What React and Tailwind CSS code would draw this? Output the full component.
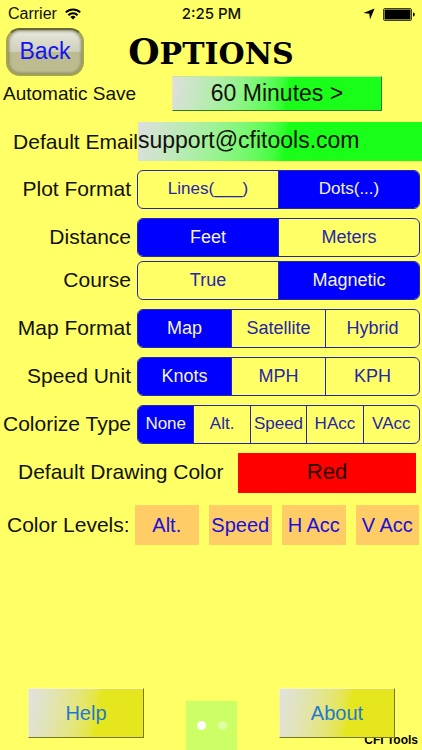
import React, { useState } from 'react';
import clsx from 'clsx';

const SEGMENT_ROWS = [
  { id: 'plot', label: 'Plot Format', options: ['Lines(___)', 'Dots(...)'], initial: 'Dots(...)', row: 'mt-[9px]', text: 'text-[17px]' },
  { id: 'distance', label: 'Distance', options: ['Feet', 'Meters'], initial: 'Feet', row: 'mt-[9px]', text: 'text-[18px]' },
  { id: 'course', label: 'Course', options: ['True', 'Magnetic'], initial: 'Magnetic', row: 'mt-1', text: 'text-[18px]' },
  { id: 'map', label: 'Map Format', options: ['Map', 'Satellite', 'Hybrid'], initial: 'Map', row: 'mt-[9px]', text: 'text-[18px]' },
  { id: 'speed', label: 'Speed Unit', options: ['Knots', 'MPH', 'KPH'], initial: 'Knots', row: 'mt-[9px]', text: 'text-[18px]' },
  { id: 'colorize', label: 'Colorize Type', options: ['None', 'Alt.', 'Speed', 'HAcc', 'VAcc'], initial: 'None', row: 'mt-[9px]', text: 'text-[17px]' },
];

const LEVELS = ['Alt.', 'Speed', 'H Acc', 'V Acc'];

const StatusBar = () => (
  <div className="grid h-7 grid-cols-3 items-center pl-2 pr-[7px]">
    <div className="flex items-center gap-2">
      <span className="text-[16px] leading-5">Carrier</span>
      <svg className="h-3 w-4" viewBox="0 0 16 12" fill="none" stroke="black" strokeWidth="2" aria-hidden="true">
        <path d="M0.8 4.4a10.2 10.2 0 0 1 14.4 0" />
        <path d="M3.4 7.2a6.5 6.5 0 0 1 9.2 0" />
        <path d="M8 11.6L5.4 9a3.7 3.7 0 0 1 5.2 0z" fill="black" stroke="none" />
      </svg>
    </div>
    <span className="text-center font-['Inter',sans-serif] text-[15px] font-medium leading-5">2:25 PM</span>
    <div className="flex items-center justify-end gap-2">
      <svg className="h-3 w-3" viewBox="0 0 12 12" aria-hidden="true">
        <path d="M11.6 0.4L7 11.6 6.3 5.7 0.4 5z" fill="black" />
      </svg>
      <svg className="h-[13px] w-8" viewBox="0 0 32 13" aria-hidden="true">
        <rect x="0.5" y="0.5" width="28" height="12" rx="1.5" fill="none" stroke="black" strokeOpacity="0.75" />
        <rect x="1.5" y="1.5" width="26" height="10" rx="0.5" fill="black" />
        <path d="M30 4.5c1.2 0.4 1.8 1.1 1.8 2s-0.6 1.6-1.8 2z" fill="black" />
      </svg>
    </div>
  </div>
);

const Segmented = ({ id, options, initial, text }) => {
  const [value, setValue] = useState(initial);

  return (
    <div
      role="group"
      aria-labelledby={`${id}-label`}
      className="mr-0.5 flex h-[39px] min-w-0 flex-1 divide-x divide-[#2626a8] overflow-hidden rounded-[6px] border border-[#2626a8]"
    >
      {options.map((option) => (
        <button
          key={option}
          type="button"
          aria-pressed={value === option}
          onClick={() => setValue(option)}
          className={clsx(
            'min-w-0 flex-1 basis-0 whitespace-nowrap pb-0.5 leading-6',
            text,
            value === option ? 'bg-[#0000fe] text-[#f4f4cf]' : 'text-[#2626a8]'
          )}
        >
          {option}
        </button>
      ))}
    </div>
  );
};

const FooterButton = ({ children, className }) => (
  <button
    type="button"
    className={clsx(
      'relative h-[50px] w-[116px] border border-b-[#777720] border-l-[#f4f4a8] border-r-[#777720] border-t-[#f8f8b0] bg-linear-100 from-[#e1e1e1] to-[#e6e61e] to-60% text-[20px] leading-6 text-[#1e7ad0]',
      className
    )}
  >
    {children}
  </button>
);

export default function App() {
  const [email, setEmail] = useState('support@cfitools.com');

  return (
    <main className="flex min-h-screen flex-col bg-[#ffff66] font-['Liberation_Sans',Arial,sans-serif] text-[#111108]">
      <StatusBar />

      <header className="grid h-12 grid-cols-[78px_1fr_78px] items-center px-1.5">
        <button
          type="button"
          className="h-12 rounded-[14px] border-2 border-[#a3a350] border-t-[#66663a] bg-linear-to-b from-[#e8e8df] from-0% via-[#cfcfba] via-50% to-[#bcbc90] to-51% pb-0.5 text-[23px] leading-7 text-[#1414f0] shadow-[inset_0_0_3px_1px_#85855a]"
        >
          Back
        </button>
        <h1 className="text-center font-['DejaVu_Serif',serif] text-[30px] font-bold uppercase leading-10 text-black first-letter:text-[36px]">
          Options
        </h1>
      </header>

      <div className="flex items-center pl-[3px] pr-10">
        <label htmlFor="autosave" className="w-[169px] whitespace-nowrap text-[19px] leading-6">
          Automatic Save
        </label>
        <button
          id="autosave"
          type="button"
          className="h-[35px] flex-1 border border-b-[#2e7d20] border-l-[#e8e8c0] border-r-[#2e7d20] border-t-[#c8e890] bg-linear-100 from-[#dedede] to-[#1aff1a] to-55% pb-0.5 text-[23px] leading-7"
        >
          60 Minutes &gt;
        </button>
      </div>

      <div className="mt-[11px] flex items-center">
        <label htmlFor="email" className="w-[138px] whitespace-nowrap text-right text-[21px] leading-6">
          Default Email
        </label>
        <input
          id="email"
          type="email"
          value={email}
          onChange={(e) => setEmail(e.target.value)}
          className="h-[39px] min-w-0 flex-1 bg-linear-100 from-[#dedede] to-[#1aff1a] to-52% pb-0.5 text-[23px] leading-7 outline-none"
        />
      </div>

      {SEGMENT_ROWS.map(({ id, label, row, ...rest }) => (
        <div key={id} className={clsx('flex items-center gap-1.5', row)}>
          <span id={`${id}-label`} className="w-[131px] whitespace-nowrap pb-0.5 text-right text-[21px] leading-6">
            {label}
          </span>
          <Segmented id={id} {...rest} />
        </div>
      ))}

      <div className="mt-[9px] flex items-center gap-2.5 pl-[18px] pr-1.5">
        <label htmlFor="drawing-color" className="w-[210px] whitespace-nowrap pb-0.5 text-[21px] leading-6">
          Default Drawing Color
        </label>
        <button id="drawing-color" type="button" className="h-10 flex-1 bg-[#fe0000] pb-0.5 text-[22px] leading-6 text-[#2a0800]">
          Red
        </button>
      </div>

      <div className="mt-3 flex items-center gap-1 pl-[7px] pr-[3px]">
        <span id="levels-label" className="w-[124px] whitespace-nowrap text-[21px] leading-6">
          Color Levels:
        </span>
        <div role="group" aria-labelledby="levels-label" className="grid flex-1 grid-cols-4 gap-2.5">
          {LEVELS.map((level) => (
            <button key={level} type="button" className="h-10 whitespace-nowrap bg-[#ffcc66] text-[20px] leading-6 text-[#1c10d8]">
              {level}
            </button>
          ))}
        </div>
      </div>

      <footer className="relative mt-auto flex items-end justify-between pl-7 pr-[27px]">
        <span className="absolute bottom-0.5 right-1 text-[12px] font-bold leading-4 text-black">CFI Tools</span>
        <FooterButton className="mb-3">Help</FooterButton>
        <div className="flex h-[49px] w-[51px] items-center justify-center gap-3 bg-[#ccff66]">
          <span className="size-[9px] rounded-full bg-white" />
          <span className="size-[9px] rounded-full bg-white/40" />
        </div>
        <FooterButton className="mb-3">About</FooterButton>
      </footer>
    </main>
  );
}
